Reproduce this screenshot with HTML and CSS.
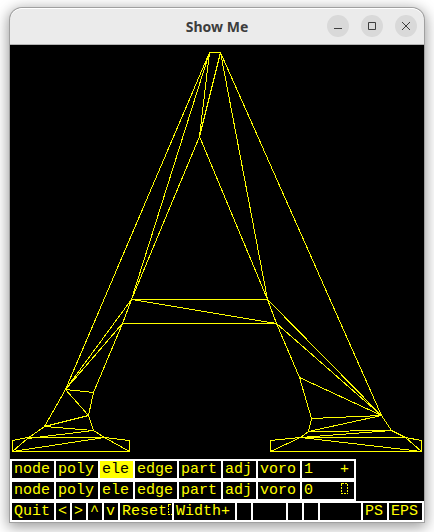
FILE: index.html
```html
<!DOCTYPE html>
<html lang="en">
<head>
<meta charset="utf-8">
<title>Show Me</title>
<link rel="stylesheet" href="styles.css">
</head>
<body>
<main class="window">
  <header class="titlebar">
    <h1 class="title">Show Me</h1>
    <div class="controls">
      <button class="control" aria-label="Minimize"><svg viewBox="0 0 22 22"><path d="M7 13.5h8"/></svg></button>
      <button class="control" aria-label="Maximize"><svg viewBox="0 0 22 22"><path d="M7.500 7.500h7v7h-7z"/></svg></button>
      <button class="control" aria-label="Close"><svg viewBox="0 0 22 22"><path d="M7 7l8 8M15 7l-8 8"/></svg></button>
    </div>
  </header>
  <svg class="mesh" viewBox="9.500 44.500 414 414" role="img" aria-label="Triangulated letter A">
    <!-- apex and legs -->
    <path d="M65 389L209 52H220L381 415M209 52L131 299M209 52L199 136L220 52L267 299M131 299L199 136L267 299"/>
    <!-- crossbar -->
    <path d="M131 299H267L276 323H122ZL276 323M131 299L65 389L122 323L93 392M267 299L381 415L276 323L299 377"/>
    <!-- left foot -->
    <path d="M65 389L93 392L88 415L65 389L44 426L88 415L93 430L44 426L27 438L93 430L104 437H27L12 440V451H129V440L104 437L129 451M104 437L12 451L27 438"/>
    <!-- right foot -->
    <path d="M299 377L381 415L311 418ZM311 418L308 431L381 415L391 430L308 431L300 437L391 430L405 437H300L270 440V451H421V440L405 437L421 451L300 437L270 451"/>
  </svg>
  <div class="toolbar">
    <div class="row">
      <button class="cell c4">node</button>
      <button class="cell c4">poly</button>
      <button class="cell c3 active">ele</button>
      <button class="cell c4">edge</button>
      <button class="cell c4">part</button>
      <button class="cell c3">adj</button>
      <button class="cell c4">voro</button>
      <button class="cell c5">1   +</button>
    </div>
    <div class="row">
      <button class="cell c4">node</button>
      <button class="cell c4">poly</button>
      <button class="cell c3">ele</button>
      <button class="cell c4">edge</button>
      <button class="cell c4">part</button>
      <button class="cell c3">adj</button>
      <button class="cell c4">voro</button>
      <button class="cell c5">0   <svg class="missing" viewBox="0 0 9 11"><path d="M1.500 .5h6v10h-6z"/></svg></button>
    </div>
    <div class="row wide">
      <button class="cell c4">Quit</button>
      <button class="cell c1">&lt;</button>
      <button class="cell c1">&gt;</button>
      <button class="cell c1">^</button>
      <button class="cell c1">v</button>
      <button class="cell c5">Reset<svg class="missing" viewBox="0 0 9 11"><path d="M1.500 .5h6v10h-6z"/></svg></button>
      <button class="cell c6">Width+</button>
      <button class="cell c1"></button>
      <button class="cell c3"></button>
      <button class="cell c1"></button>
      <button class="cell c1"></button>
      <button class="cell c4 fill"></button>
      <button class="cell c2">PS</button>
      <button class="cell c3">EPS</button>
    </div>
  </div>
</main>
</body>
</html>
```
FILE: styles.css
```css
* {
  box-sizing: border-box;
}

body {
  margin: 0;
  padding: 8px 10px 10px;
  background: #fff;
}

.window {
  border-radius: 12px 12px 0 0;
  background: #000;
  box-shadow: 0 0 0 1px #a0a0a0, 0 3px 14px 2px rgba(0, 0, 0, 0.4);
}

.titlebar {
  display: grid;
  grid-template-columns: 1fr auto 1fr;
  align-items: center;
  height: 37px;
  padding: 0 7px;
  border-bottom: 1px solid #b4b4b4;
  border-radius: 12px 12px 0 0;
  background: #ebebeb;
  box-shadow: inset 0 1px #fff;
}

.title {
  grid-column: 2;
  margin: 0;
  padding-top: 2px;
  font: bold 14px/20px "Noto Sans", "Open Sans", sans-serif;
  color: #3d3d3d;
}

.controls {
  display: flex;
  justify-content: flex-end;
  gap: 12px;
}

.control {
  width: 22px;
  height: 22px;
  padding: 0;
  border: 0;
  border-radius: 50%;
  background: #d9d9d9;
}

.control svg {
  display: block;
  fill: none;
  stroke: #3d3d3d;
  stroke-width: 1;
}

.mesh {
  display: block;
  width: 100%;
  fill: none;
  stroke: #ff0;
  stroke-width: 1;
  shape-rendering: crispEdges;
}

.row {
  display: flex;
  gap: 2px;
  width: fit-content;
  padding: 2px;
  background: #fff;
}

.wide {
  width: auto;
}

.cell {
  flex: none;
  height: 17px;
  padding: 0 0 0 2px;
  border: 0;
  border-radius: 0;
  overflow: hidden;
  background: #000;
  color: #ff0;
  font: 15px/17px "Liberation Mono", monospace;
  text-align: left;
  white-space: pre;
}

.active {
  background: #ff0;
  color: #000;
}

.c1 { width: 14px; }
.c2 { width: 24px; }
.c3 { width: 33px; }
.c4 { width: 42px; }
.c5 { width: 52px; }
.c6 { width: 61px; }

.fill {
  flex: 1 0 auto;
  width: auto;
}

.missing {
  width: 9px;
  height: 11px;
  vertical-align: baseline;
  fill: none;
  stroke: #ff0;
  stroke-dasharray: 2 1;
  shape-rendering: crispEdges;
}
```
